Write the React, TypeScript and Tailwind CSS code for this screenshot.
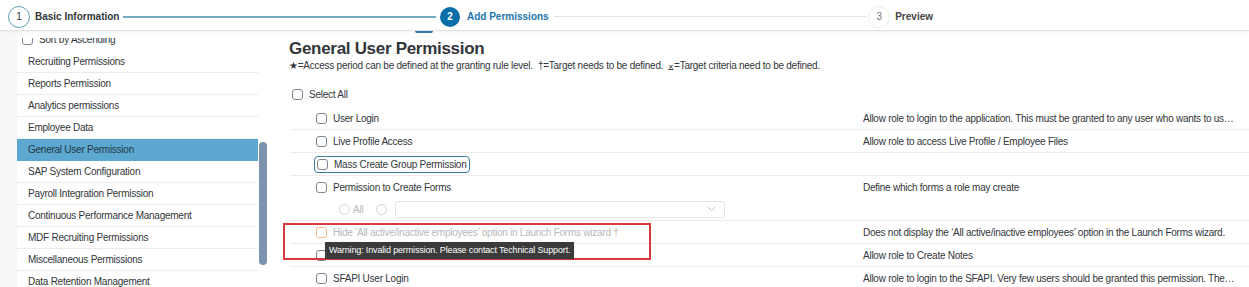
import React from "react";

const sidebarItems = [
  "Recruiting Permissions",
  "Reports Permission",
  "Analytics permissions",
  "Employee Data",
  "General User Permission",
  "SAP System Configuration",
  "Payroll Integration Permission",
  "Continuous Performance Management",
  "MDF Recruiting Permissions",
  "Miscellaneous Permissions",
  "Data Retention Management",
];

function Box({ className = "border-[#7d8791]" }: { className?: string }) {
  return <span className={`inline-block w-[11px] h-[11px] shrink-0 rounded-[3px] border bg-white ${className}`} />;
}

function Row({
  label,
  desc,
  children,
  faded,
  focus,
}: {
  label: string;
  desc?: string;
  children?: React.ReactNode;
  faded?: boolean;
  focus?: boolean;
}) {
  return (
    <div className="border-b border-[#ececec]">
      <div className="grid grid-cols-[573px_1fr] h-[22px] items-center">
        <div className="pl-[26px] flex items-center">
          <div
            className={`flex items-center gap-[6px] ${
              focus ? "-ml-[2px] pl-[2px] pr-[2px] h-[17px] rounded-[4px] border border-[#3f7fa6]" : ""
            }`}
          >
            <Box className={faded ? "border-[#f0b98f]" : "border-[#7d8791]"} />
            <span className={faded ? "text-[#b8b8b8]" : "text-[#32363a]"}>{label}</span>
          </div>
        </div>
        <div className="truncate pr-[12px] text-[#32363a]">{desc}</div>
      </div>
      {children}
    </div>
  );
}

export default function App() {
  return (
    <div
      className="w-[1249px] h-[287px] overflow-hidden bg-white text-[10px] tracking-[-0.25px]"
      style={{ fontFamily: '"Liberation Sans", Arial, sans-serif' }}
    >
      {/* Wizard steps */}
      <header className="h-[31px] border-b border-[#e3e3e3] shadow-[0_1px_2px_rgba(0,0,0,0.06)] relative z-10 bg-white">
        <div className="w-[925px] ml-[8px] h-full flex items-center pt-[3px] font-bold tracking-normal">
          <span className="w-[22px] h-[22px] rounded-full border border-[#5ea3b8] flex items-center justify-center font-normal text-[#333]">
            1
          </span>
          <span className="ml-[5px] text-[#32363a]">Basic Information</span>
          <span className="flex-1 mx-[4px] h-[2px] bg-[#72adbf]" />
          <span className="w-[20px] h-[20px] rounded-full bg-[#0b6ea8] flex items-center justify-center text-white">2</span>
          <span className="ml-[7px] text-[#2274ad]">Add Permissions</span>
          <span className="flex-1 ml-[5px] mr-[2px] h-[1px] bg-[#e3e3e3]" />
          <span className="w-[22px] h-[22px] rounded-full border border-[#ececec] flex items-center justify-center font-normal text-[#777]">
            3
          </span>
          <span className="ml-[5px] text-[#444]">Preview</span>
        </div>
      </header>

      <div className="flex">
        {/* Sidebar */}
        <aside className="w-[270px] flex h-[256px]">
          <div className="w-[17px] bg-[#f6f7f8]" />
          <div className="mt-[7px] w-[241px] overflow-hidden">
            <div className="-mt-[11px]">
              <div className="h-[24px] flex items-center gap-[6px] pl-[5px] text-[#32363a]">
                <Box />
                <span>Sort by Ascending</span>
              </div>
              {sidebarItems.map((item) => (
                <div
                  key={item}
                  className={`h-[22px] flex items-center pl-[11px] border-b ${
                    item === "General User Permission"
                      ? "bg-[#5da8d0] border-[#5da8d0] text-[#243847]"
                      : "border-[#ececec] text-[#32363a]"
                  }`}
                >
                  {item}
                </div>
              ))}
            </div>
          </div>
          <div className="w-[8px] ml-[1px]">
            <div className="mt-[111px] h-[123px] rounded-full bg-[#7c93ad]" />
          </div>
        </aside>

        {/* Main content */}
        <main className="relative flex-1">
          <span className="absolute left-[145px] top-0 w-[18px] h-[2px] bg-[#2d7fb5] rounded-b" />
          <h1 className="ml-[19px] mt-[8px] text-[17px] leading-[20px] font-bold tracking-[-0.3px] text-[#32363a]">
            General User Permission
          </h1>
          <p className="ml-[19px] mt-[1px] leading-[12px] text-[#32363a]">
            ★=Access period can be defined at the granting rule level.&nbsp; †=Target needs to be defined.&nbsp;
            ⨱=Target criteria need to be defined.
          </p>

          <div className="ml-[22px] mt-[11px] h-[22px] flex items-center gap-[6px] text-[#32363a]">
            <Box />
            <span>Select All</span>
          </div>

          <div className="ml-[20px] mt-[2px]">
            <Row label="User Login" desc="Allow role to login to the application. This must be granted to any user who wants to use the application." />
            <Row label="Live Profile Access" desc="Allow role to access Live Profile / Employee Files" />
            <Row label="Mass Create Group Permission" focus />
            <Row label="Permission to Create Forms" desc="Define which forms a role may create">
              <div className="h-[22px] flex items-center pl-[49px] gap-[3px] text-[#b8b8b8]">
                <span className="w-[11px] h-[11px] rounded-full border border-[#d4d4d4]" />
                <span>All</span>
                <span className="ml-[10px] w-[11px] h-[11px] rounded-full border border-[#d4d4d4]" />
                <div className="ml-[5px] w-[330px] h-[17px] border border-[#e4e4e4] rounded-[2px] flex items-center justify-end pr-[8px]">
                  <svg width="9" height="6" viewBox="0 0 9 6" fill="none" stroke="#bdbdbd" strokeWidth="1">
                    <path d="M1 1l3.5 3.5L8 1" />
                  </svg>
                </div>
              </div>
            </Row>
            <Row
              label="Hide ‘All active/inactive employees’ option in Launch Forms wizard †"
              desc="Does not display the ‘All active/inactive employees’ option in the Launch Forms wizard."
              faded
            />
            <Row label="Create Notes" desc="Allow role to Create Notes" />
            <Row label="SFAPI User Login" desc="Allow role to login to the SFAPI. Very few users should be granted this permission. The permission is needed for integration users." />
          </div>

          {/* Highlight box and tooltip overlays */}
          <div className="absolute left-[13px] top-[192px] w-[368px] h-[37px] border-2 border-[#d8393f]" />
          <div className="absolute left-[55px] top-[211px] h-[17px] px-[4px] flex items-center bg-[#3b3b3b] text-white text-[9px] tracking-[-0.15px] shadow">
            Warning: Invalid permission. Please contact Technical Support.
          </div>
        </main>
      </div>
    </div>
  );
}
